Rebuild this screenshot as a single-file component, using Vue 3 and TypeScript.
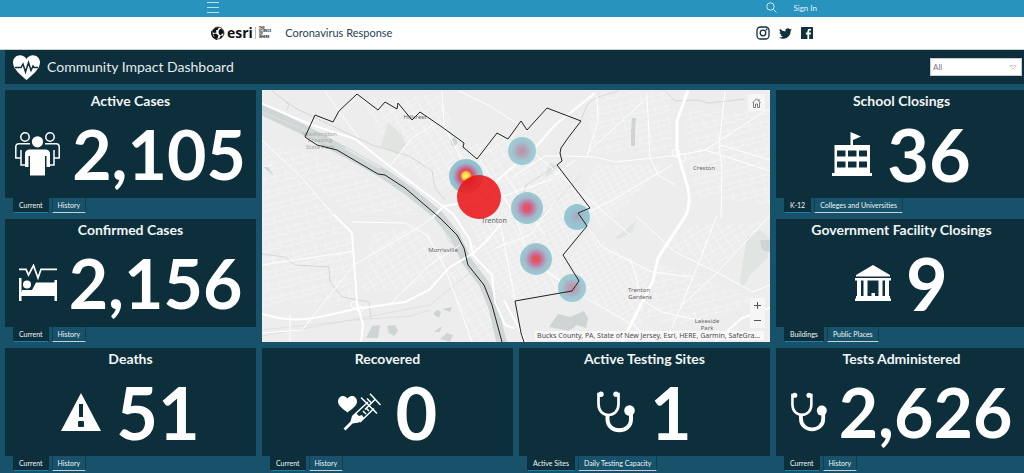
<script setup lang="ts">
import { ref, reactive } from 'vue'

interface Card {
  id: string
  title: string
  value: string
  icon: string
  iconBox: [number, number]
  tabs: string[]
  area: string
}

const cards: Card[] = [
  { id: 'active', title: 'Active Cases', value: '2,105', icon: 'people', iconBox: [45, 44], tabs: ['Current', 'History'], area: 'a' },
  { id: 'confirmed', title: 'Confirmed Cases', value: '2,156', icon: 'bed', iconBox: [38, 37], tabs: ['Current', 'History'], area: 'b' },
  { id: 'deaths', title: 'Deaths', value: '51', icon: 'warning', iconBox: [40, 38], tabs: ['Current', 'History'], area: 'c' },
  { id: 'recovered', title: 'Recovered', value: '0', icon: 'syringe', iconBox: [43, 38], tabs: ['Current', 'History'], area: 'd' },
  { id: 'sites', title: 'Active Testing Sites', value: '1', icon: 'stethoscope', iconBox: [38, 42], tabs: ['Active Sites', 'Daily Testing Capacity'], area: 'e' },
  { id: 'tests', title: 'Tests Administered', value: '2,626', icon: 'stethoscope', iconBox: [36, 40], tabs: ['Current', 'History'], area: 'f' },
  { id: 'schools', title: 'School Closings', value: '36', icon: 'school', iconBox: [40, 44], tabs: ['K-12', 'Colleges and Universities'], area: 'g' },
  { id: 'government', title: 'Government Facility Closings', value: '9', icon: 'civic', iconBox: [36, 36], tabs: ['Buildings', 'Public Places'], area: 'h' },
]

const iconView: Record<string, string> = {
  people: '0 0 45 44',
  bed: '0 0 38 37',
  warning: '0 0 40 38',
  syringe: '0 0 43 38',
  stethoscope: '0 0 38 42',
  school: '0 0 40 44',
  civic: '0 0 36 36',
}

const selected = reactive<Record<string, number>>(Object.fromEntries(cards.map((c) => [c.id, 0])))
const region = ref('All')

const streetGrids = [
  { fill: 'grid-a', points: '262,150 300,178 333,212 352,240 353,300 262,306' },
  { fill: 'grid-b', points: '360,100 440,94 462,150 520,128 500,180 440,190 395,160' },
  { fill: 'grid-c', points: '470,225 515,160 556,165 590,208 565,255 575,290 515,300 498,290' },
  { fill: 'grid-b', points: '372,232 418,228 448,250 440,275 410,290 362,290' },
  { fill: 'grid-c', points: '587,232 650,272 640,335 590,300 570,260' },
  { fill: 'grid-a', points: '685,110 770,110 770,205 690,195' },
  { fill: 'grid-a', points: '590,92 670,92 672,150 590,155' },
  { fill: 'grid-c', points: '595,165 665,165 600,230 580,200' },
  { fill: 'grid-b', points: '695,225 765,222 716,270 665,245' },
  { fill: 'grid-a', points: '660,265 710,280 755,300 700,325 645,320' },
  { fill: 'grid-b', points: '448,270 470,262 490,300 495,340 470,342' },
  { fill: 'grid-a', points: '262,145 350,212 420,215 370,178 300,150' },
]

const minorRoads = [
  'M262 140 302 178 336 218',
  'M262 265 355 251',
  'M262 333 302 330 354 265 419 227 437 214',
  'M352 222 405 223 427 235 445 268 472 342',
  'M325 91 340 113 359 138',
  'M390 166 412 138 439 121',
  'M442 91 444 125 462 161 473 187',
  'M459 91 490 106 522 127',
  'M563 156 595 157 615 162 672 156 705 150 770 108',
  'M705 150 770 171',
  'M720 145 770 160',
  'M647 93 650 158 658 175 675 185',
  'M725 91 719 145 722 168 721 218',
  'M647 98 587 153',
  'M597 96 598 121 587 156',
  'M672 165 615 199 577 218',
  'M635 215 675 252 718 273 753 292 770 285',
  'M717 215 698 265 672 328',
  'M770 215 717 273 682 305',
  'M587 226 602 247 652 272 692 277',
  'M540 265 575 292 633 325 655 342',
  'M642 300 662 312 688 318 720 322',
  'M630 258 637 280 640 300',
  'M480 160 515 215 530 260 575 292',
  'M505 175 545 235',
  'M492 200 550 180 575 160',
  'M496 248 530 235 556 200',
  'M500 222 515 300',
  'M390 304 430 265 460 245',
  'M290 315 290 342',
  'M512 178 545 156 563 156',
  'M530 150 590 200 630 235',
]

const hotspots = [
  { x: 522, y: 151, r: 14, heat: 'heat-faint' },
  { x: 466, y: 176, r: 17, heat: 'heat-peak' },
  { x: 527, y: 208, r: 16, heat: 'heat-strong' },
  { x: 577, y: 217, r: 13, heat: 'heat-cool' },
  { x: 536, y: 259, r: 16, heat: 'heat-strong' },
  { x: 572, y: 288, r: 14, heat: 'heat-faint' },
]
</script>

<template>
  <div class="page">
    <header>
      <div class="topbar">
        <nav class="topbar-inner" aria-label="Global">
          <button class="bare" type="button" aria-label="Menu">
            <svg width="12" height="12" viewBox="0 0 12 12"><path d="M0 1.5H12M0 6.5H12M0 11.5H12" stroke="#b7e2f2" fill="none" /></svg>
          </button>
          <div class="account">
            <button class="bare" type="button" aria-label="Search">
              <svg width="11" height="11" viewBox="0 0 11 11"><g fill="none" stroke="#cdeaf5"><circle cx="4.500" cy="4.500" r="3.700" /><path d="M7.300 7.300 10.500 10.500" /></g></svg>
            </button>
            <a class="signin" href="#">Sign In</a>
          </div>
        </nav>
      </div>
      <div class="sitebar">
        <div class="sitebar-inner">
          <a class="brand" href="#">
            <svg width="14" height="14" viewBox="0 0 14 14">
              <circle cx="7" cy="7" r="6" fill="#fff" stroke="#222" stroke-width=".8" />
              <path d="M2 4 5 1.500 8 1.300 7 3.500 5 4.500 5.500 6.500 3 7 1.500 6ZM8 4 10 2.500 12.500 5 13 8 11 7.500 10 9.500 8 8 7.500 6ZM2 8 5 7.500 7.500 9.500 6.500 12.500 4 12ZM9 10.500 12 9 10.500 12 8.500 12.800Z" fill="#111" />
              <path d="M1 5C0 9 2 12 6 13.500" fill="none" stroke="#111" stroke-width="1.300" />
            </svg>
            <span class="esri">esri</span>
            <span class="tagline">THE<br />SCIENCE<br />OF<br />WHERE</span>
          </a>
          <a class="site-title" href="#">Coronavirus Response</a>
          <div class="social">
            <a href="#" aria-label="Instagram">
              <svg width="14" height="14" viewBox="0 0 14 14"><g fill="none" stroke="#12313e" stroke-width="1.300"><rect x="1" y="1" width="12" height="12" rx="3.500" /><circle cx="7" cy="7" r="2.800" /></g><circle cx="10.600" cy="3.400" r=".9" fill="#12313e" /></svg>
            </a>
            <a href="#" aria-label="Twitter">
              <svg width="13" height="11" viewBox="0 1.800 24 20.400"><path fill="#12313e" d="M24 4.600a10 10 0 0 1-2.800.8 5 5 0 0 0 2.100-2.700 10 10 0 0 1-3.100 1.200A4.900 4.900 0 0 0 11.800 8.300 14 14 0 0 1 1.700 3.200a4.900 4.900 0 0 0 1.500 6.500 5 5 0 0 1-2.200-.6 4.900 4.900 0 0 0 3.900 4.900 5 5 0 0 1-2.200.1 4.900 4.900 0 0 0 4.600 3.400A10 10 0 0 1 0 19.500 14 14 0 0 0 21.500 7.100 10 10 0 0 0 24 4.600Z" /></svg>
            </a>
            <a href="#" aria-label="Facebook">
              <svg width="12" height="12" viewBox="0 0 12 12"><path fill="#12313e" d="M.6 0H11.400Q12 0 12 .6V11.400Q12 12 11.400 12H8.200V7.400H9.800L10 5.600H8.200V4.500Q8.200 3.600 9.100 3.600H10.100V2Q6.400 1.300 6.400 4.300V5.600H4.900V7.400H6.400V12H.6Q0 12 0 11.400V.6Q0 0 .6 0Z" /></svg>
            </a>
          </div>
        </div>
      </div>
    </header>

    <main class="dashboard">
      <div class="titlebar">
        <svg width="27" height="25" viewBox="0 0 27 25">
          <path fill="#fff" d="M13.500 25C9 21 0 14.500 0 7.500 0 0 9.500-2.500 13.500 4 17.500-2.500 27 0 27 7.500 27 14.500 18 21 13.500 25Z" />
          <path fill="none" stroke="#0d2f3b" stroke-width="1.500" d="M2 12.500H8L10 9 12.500 17 15.500 7.500 18 15.500 20 11 21 12.500H25" />
        </svg>
        <h1>Community Impact Dashboard</h1>
        <div class="filter">
          <select v-model="region" aria-label="Region">
            <option>All</option>
          </select>
          <svg width="8" height="5" viewBox="0 0 8 5"><path d="M.7.7H7.300L4 4.200Z" fill="none" stroke="#b9bfc2" stroke-width=".8" /></svg>
        </div>
      </div>

      <div class="grid">
        <section v-for="card in cards" :key="card.id" class="cell" :class="'area-' + card.area">
          <div class="card">
            <h2>{{ card.title }}</h2>
            <div class="metric" :class="{ long: card.value.length > 2 }">
              <svg :width="card.iconBox[0]" :height="card.iconBox[1]" :viewBox="iconView[card.icon]" aria-hidden="true">
                <g v-if="card.icon === 'people'">
                  <g fill="none" stroke="#fff" stroke-width="1.500">
                    <circle cx="10" cy="5" r="4.200" />
                    <circle cx="35" cy="5" r="4.200" />
                    <path d="M15 11.700H4Q.8 11.700.8 15V26H5.500M6 18V33H11M30 11.700H41Q44.200 11.700 44.200 15V26H39.500M39 18V33H34" />
                  </g>
                  <circle cx="22.500" cy="9.800" r="5.600" fill="#fff" />
                  <path d="M15 17.500H30Q35 17.500 35 22V35H31.500V24H30V43.500H15V24H13.500V35H10V22Q10 17.500 15 17.500Z" fill="#fff" />
                </g>
                <g v-else-if="card.icon === 'bed'">
                  <path d="M0 5.300H7L9.500 11 14.500 1.500 19 14 22 5.300H38" fill="none" stroke="#fff" stroke-width="1.700" />
                  <path d="M0 14H2.500V27.500H35.500V16H38V37H35.500V32H2.500V37H0Z" fill="#fff" />
                  <circle cx="8" cy="20.500" r="4" fill="#fff" />
                  <path d="M17 18.500H36V28H3V26H13Z" fill="#fff" />
                </g>
                <g v-else-if="card.icon === 'warning'">
                  <path d="M20 0 40 38H0Z" fill="#fff" />
                  <rect x="18" y="11" width="4" height="13" fill="#0d2f3b" />
                  <rect x="17" y="28" width="6" height="6" rx="1" fill="#0d2f3b" />
                </g>
                <g v-else-if="card.icon === 'syringe'">
                  <path d="M9.500 19.500C6 16.500 0 13 0 8.500 0 2.500 7 1 9.500 5.500 12 1 19 2.500 19 8.500 19 13 13 16.500 9.500 19.500Z" fill="#fff" />
                  <g fill="none" stroke="#fff" stroke-width="1.500">
                    <path d="M32 .8 42.500 12M37 6.500 27 16.500M23 4.500 39 20.500M33 9.500 29 5.500M15 23 30 9M22 29 36 15.500" />
                    <path d="M25 18 28 21M28 15 31 18" />
                  </g>
                  <path d="M14 23 18 20 21 23 24 22 26 25 21 29.500 14.500 30.500 7.500 37.500 5.500 35.500 12.500 28.500Z" fill="#fff" />
                </g>
                <g v-else-if="card.icon === 'stethoscope'">
                  <g fill="none" stroke="#fff">
                    <path d="M4 3H1.500V13C1.500 20 6 24 11.500 24S21.500 20 21.500 13V3H19" stroke-width="2.700" />
                    <path d="M10.500 24V28C10.500 43 34 43 34 28V23" stroke-width="4" />
                  </g>
                  <circle cx="4" cy="3.300" r="2.700" fill="#fff" />
                  <circle cx="19" cy="3.300" r="2.700" fill="#fff" />
                  <circle cx="32.500" cy="19.500" r="5.300" fill="#fff" />
                </g>
                <g v-else-if="card.icon === 'school'" fill="#fff">
                  <path d="M18.500 14V0L29 4.500 21 8V14Z" />
                  <path fill-rule="evenodd" d="M2.500 13H38V41H40V44H0V41H2.500ZM5 18.500V24.500H13.500V18.500ZM16 18.500V24.500H24.500V18.500ZM27 18.500V24.500H35V18.500ZM5 29.500V35.500H13.500V29.500ZM16 29.500V35.500H24.500V29.500ZM27 29.500V35.500H35V29.500Z" />
                </g>
                <g v-else fill="#fff">
                  <path d="M18 0 35 10V11.500H1V10ZM0 13H36V15.500H0Z" />
                  <path d="M2 15H6V32H2ZM8.500 15H12.500V32H8.500ZM23.500 15H27.500V32H23.500ZM30 15H34V32H30Z" />
                  <path d="M1 31H16.500V28H20V31H35V33.500H36V36H0V33.500H1Z" />
                </g>
              </svg>
              <span class="value">{{ card.value }}</span>
            </div>
          </div>
          <div class="tabs" role="tablist" :aria-label="card.title">
            <button
              v-for="(tab, i) in card.tabs"
              :key="tab"
              type="button"
              role="tab"
              :aria-selected="selected[card.id] === i"
              :class="{ on: selected[card.id] === i }"
              @click="selected[card.id] = i"
            >{{ tab }}</button>
          </div>
        </section>

        <section class="map" aria-label="Map">
          <svg class="canvas" viewBox="262 90 508 252" preserveAspectRatio="xMidYMid slice">
            <defs>
              <pattern id="grid-a" width="11" height="13" patternUnits="userSpaceOnUse" patternTransform="rotate(-14)"><path d="M0 4H11M4 0V9M0 10Q5 7 11 10" class="street" /></pattern>
              <pattern id="grid-b" width="9" height="12" patternUnits="userSpaceOnUse" patternTransform="rotate(-32)"><path d="M0 3H9M3 0V12M3 8H9" class="street" /></pattern>
              <pattern id="grid-c" width="7" height="10" patternUnits="userSpaceOnUse" patternTransform="rotate(-30)"><path d="M0 3H7M2 0V10M0 8H7" class="street" /></pattern>
              <radialGradient id="heat-faint"><stop offset="0" stop-color="#b9859f" /><stop offset=".35" stop-color="#ae9bb2" /><stop offset=".7" stop-color="#96c2cd" /><stop offset="1" stop-color="#93c9d4" /></radialGradient>
              <radialGradient id="heat-strong"><stop offset="0" stop-color="#e8403c" /><stop offset=".2" stop-color="#db4655" /><stop offset=".4" stop-color="#bb70a0" /><stop offset=".68" stop-color="#99b4c5" /><stop offset="1" stop-color="#8dc8d2" /></radialGradient>
              <radialGradient id="heat-cool"><stop offset="0" stop-color="#a59db7" /><stop offset=".5" stop-color="#92b9c9" /><stop offset="1" stop-color="#8ac6d2" /></radialGradient>
              <radialGradient id="heat-peak"><stop offset="0" stop-color="#ffff42" /><stop offset=".2" stop-color="#ffd332" /><stop offset=".36" stop-color="#db3543" /><stop offset=".54" stop-color="#b86899" /><stop offset=".75" stop-color="#8bb5c4" /><stop offset="1" stop-color="#86c4d0" /></radialGradient>
            </defs>
            <rect x="162" y="-10" width="708" height="452" fill="#ededed" />
            <polygon v-for="(g, i) in streetGrids" :key="i" :points="g.points" :fill="`url(#${g.fill})`" />
            <g fill="#e1e5e1">
              <path d="M388 122 402 135 406 144 398 155 381 146ZM549 163 558 164 556 170 545 178ZM615 238 637 220 632 232 619 239ZM747 237 760 230 770 238 768 258 750 275 742 289 740 280ZM441 222 451 232 459 248 448 242Z" />
            </g>
            <g fill="#cfd4d5">
              <path d="M549 327 558 314 570 317 584 311 588 318 586 328 577 325 569 331ZM366 338 372 326 380 325 378 338ZM387 326 395 325 398 331 394 336 389 333ZM433 314 437 310 441 312 439 318ZM442 309 452 307 450 312ZM434 332 442 326 440 332ZM263 167 268 167 274 176ZM450 140 455 137 458 143 453 147ZM440 339 447 333 453 335 450 342ZM632 118 636 118 635 131 635 146 631 146 631 132ZM760 240 770 240 770 252 762 250Z" />
            </g>
            <path class="river" d="M256 107 300 128 345 152 384 174 410 192 438 215 455 236 466 260 484 284 493 306 503 348" />
            <path class="canal" d="M345 148 380 168" />
            <path class="stream" d="M272 91 295 108 372 145 409 156 432 171 435 188 445 200M262 254 285 257 295 265 329 267 330 282 342 297 369 302 371 318M665 91 675 101 698 100 708 103 728 101 745 99M581 120 587 105 595 98 618 91M556 165 542 175 526 185 524 192M282 98 289 105 287 110" />
            <path class="rail" d="M262 330 355 320 410 316 430 310M262 336 330 324 430 305 480 265M262 112 300 128 330 145M540 218 582 174" />
            <path v-for="d in minorRoads" :key="d" :d="d" class="minor" />
            <g class="major">
              <path d="M258 102 312 125 355 139 392 168 444 207 454 215 470 240 473 255 492 275 495 302 505 325 514 328" />
              <path d="M432 218 444 206 480 200 502 176 535 148 555 125 595 93" />
              <path d="M262 314Q290 323 320 317L355 309 405 302 429 290 449 268 475 252 490 237 502 222" />
              <path d="M334 215 352 233 357 303 363 325 361 342" />
              <path d="M770 308 742 318 715 342M504 300 526 342" />
            </g>
            <path class="freeway" d="M688 90 677 121 677 151 688 188Q691 205 686 215L658 258 653 281 622 342" />
            <g class="ramp"><circle cx="354" cy="305" r="3" /><circle cx="360" cy="309" r="3" /><circle cx="676" cy="153" r="4" /><circle cx="682" cy="158" r="4" /><circle cx="473" cy="249" r="3" /></g>
            <g class="labels">
              <text x="415" y="119">Hillcrest</text>
              <text x="443" y="252">Morrisville</text>
              <text x="704" y="170">Creston</text>
              <text x="639" y="292">Trenton</text>
              <text x="640" y="299">Gardens</text>
              <text x="707" y="323">Lakeside</text>
              <text x="707" y="330">Park</text>
              <g class="park"><text x="320" y="136">Washington</text><text x="320" y="142">Crossing</text><text x="320" y="149">State Park</text></g>
            </g>
            <circle v-for="h in hotspots" :key="h.x" :cx="h.x" :cy="h.y" :r="h.r" :fill="`url(#${h.heat})`" opacity=".9" />
            <path class="boundary" d="M305 137 315 115 333 122 339 111 357 94 378 110 385 102 397 109 398 103 412 120 420 112 442 127 464 143 463 147 477 159 497 133 508 139 521 121 527 130 547 108 581 121 568 138 561 148 560 153 562 161 557 165 590 208 578 213 587 226 563 255 579 281 572 291 515 301 521 333 524 342M305 137 317 145 337 150 378 174 385 175 405 188 440 218 457 235 464 248 468 265 484 285 492 305 502 342" />
            <circle cx="479" cy="197" r="22" fill="#eb1719" opacity=".88" />
            <text x="494" y="223" class="city">Trenton</text>
          </svg>
          <button class="map-btn home" type="button" aria-label="Default extent">
            <svg width="9" height="10" viewBox="0 0 9 10"><path d="M.5 5 4.500.8 8.500 5M1.500 4.500V9.500H3.500V6H5.500V9.500H7.500V4.500M7 3V1" fill="none" stroke="#6e6e6e" stroke-width=".9" /></svg>
          </button>
          <div class="zoomer">
            <button class="map-btn" type="button" aria-label="Zoom in"><svg width="7" height="7" viewBox="0 0 7 7"><path d="M0 3.500H7M3.500 0V7" stroke="#555" /></svg></button>
            <button class="map-btn" type="button" aria-label="Zoom out"><svg width="7" height="7" viewBox="0 0 7 7"><path d="M0 3.500H7" stroke="#555" /></svg></button>
          </div>
          <p class="credit">Bucks County, PA, State of New Jersey, Esri, HERE, Garmin, SafeGra...</p>
        </section>
      </div>
    </main>
  </div>
</template>

<style>
body {
  background: #17526a;
}
</style>

<style scoped>
.page {
  min-height: 100vh;
  display: flex;
  flex-direction: column;
  overflow: hidden;
  background: #17526a;
  color: #fff;
  font-family: Lato, "Open Sans", sans-serif;
}
svg {
  display: block;
  flex: none;
}
a {
  color: inherit;
  text-decoration: none;
}
button {
  font: inherit;
  color: inherit;
  cursor: pointer;
}
.bare {
  padding: 0;
  border: 0;
  background: none;
}
.topbar {
  background: #2894bd;
}
.topbar-inner {
  max-width: 610px;
  height: 17px;
  margin: 0 auto;
  display: flex;
  align-items: center;
  justify-content: space-between;
}
.topbar-inner > .bare {
  padding-bottom: 4px;
}
.account {
  display: flex;
  align-items: center;
  gap: 16px;
  padding-bottom: 2px;
}
.signin {
  font-size: 8px;
  line-height: 12px;
  color: #e3f3f9;
}
.sitebar {
  background: #fff;
  border-bottom: 1px solid #c9ced0;
}
.sitebar-inner {
  max-width: 602px;
  height: 32px;
  margin: 0 auto;
  display: flex;
  align-items: center;
}
.brand {
  display: flex;
  align-items: center;
  gap: 2px;
  color: #111;
}
.esri {
  font: bold 14px/16px "Open Sans", sans-serif;
}
.tagline {
  padding-left: 3px;
  border-left: 1px solid #bbb;
  font: bold 3px/3px "Open Sans", sans-serif;
}
.site-title {
  margin-left: 14px;
  font-size: 11px;
  line-height: 14px;
  color: #1d4354;
}
.social {
  display: flex;
  align-items: center;
  gap: 9px;
  margin-left: auto;
}
.dashboard {
  flex: 1;
  display: flex;
  flex-direction: column;
  gap: 6px;
  padding: 0 0 2px 5px;
}
.titlebar {
  display: flex;
  align-items: center;
  gap: 7px;
  min-height: 34px;
  padding: 0 2px 0 8px;
  background: #0d2f3b;
}
h1 {
  margin: 0;
  font-size: 14px;
  line-height: 18px;
  font-weight: 400;
  color: #e6ebed;
}
.filter {
  display: flex;
  align-items: center;
  width: 92px;
  margin-left: auto;
  background: #fff;
  border: 1px solid #c6cdd0;
  box-sizing: border-box;
  padding-right: 4px;
}
select {
  appearance: none;
  flex: 1;
  height: 16px;
  padding: 0 2px;
  border: 0;
  background: none;
  font: 8px/16px Lato, sans-serif;
  color: #777;
}
.grid {
  flex: 1;
  display: grid;
  grid-template-columns: repeat(4, 1fr);
  grid-template-rows: repeat(3, minmax(123px, 1fr));
  grid-template-areas: "a m m g" "b m m h" "c d e f";
  gap: 6px;
  margin-right: -3px;
}
.area-a { grid-area: a; }
.area-b { grid-area: b; }
.area-c { grid-area: c; }
.area-d { grid-area: d; }
.area-e { grid-area: e; }
.area-f { grid-area: f; }
.area-g { grid-area: g; }
.area-h { grid-area: h; }
.cell {
  display: flex;
  flex-direction: column;
  min-width: 0;
}
.card {
  flex: 1;
  display: flex;
  flex-direction: column;
  background: #0d2f3b;
}
h2 {
  margin: 3px 0 0;
  font-size: 14px;
  line-height: 16px;
  font-weight: 700;
  text-align: center;
  color: #f1f4f5;
}
.metric {
  flex: 1;
  display: flex;
  align-items: center;
  justify-content: center;
  gap: 15px;
}
.value {
  font-size: 72px;
  line-height: 80px;
  font-weight: 700;
}
.long {
  gap: 12px;
}
.long .value {
  font-size: 68px;
}
.tabs {
  display: flex;
  gap: 3px;
  padding-left: 8px;
}
.tabs button {
  height: 15px;
  padding: 0 5px;
  background: #17526a;
  border: 0 solid #10404f;
  border-width: 0 1px 1px;
  border-bottom-color: #c3d0d6;
  font-size: 7px;
  line-height: 14px;
  color: #f0f4f6;
}
.tabs .on {
  background: #0d2f3b;
  border-color: #0d2f3b;
  border-bottom-color: #1c7fa8;
}
.map {
  grid-area: m;
  position: relative;
  overflow: hidden;
}
.canvas {
  position: absolute;
  inset: 0;
  width: 100%;
  height: 100%;
}
.street {
  fill: none;
  stroke: #f8f8f8;
  stroke-width: .7;
}
.river {
  fill: none;
  stroke: #d0d5d6;
  stroke-width: 10;
}
.canal {
  fill: none;
  stroke: #e6e8e8;
  stroke-width: 2;
}
.stream {
  fill: none;
  stroke: #d4d8d8;
}
.rail {
  fill: none;
  stroke: #e0e0e0;
}
.minor {
  fill: none;
  stroke: #fff;
  stroke-width: 1;
}
.major {
  fill: none;
  stroke: #fff;
  stroke-width: 2;
  stroke-linejoin: round;
}
.freeway {
  fill: none;
  stroke: #fff;
  stroke-width: 3;
}
.ramp {
  fill: none;
  stroke: #fff;
}
.boundary {
  fill: none;
  stroke: #222;
  stroke-width: 1;
}
.labels,
.city {
  font: 6px "Noto Sans", sans-serif;
  fill: #666;
  text-anchor: middle;
}
.park {
  fill: #a3aaa0;
}
.city {
  font-size: 7px;
}
.map-btn {
  display: flex;
  align-items: center;
  justify-content: center;
  width: 15px;
  height: 15px;
  padding: 0;
  border: 0;
  background: #f6f6f6;
}
.home {
  position: absolute;
  top: 4px;
  right: 5px;
  width: 17px;
  height: 17px;
}
.zoomer {
  position: absolute;
  right: 5px;
  bottom: 14px;
}
.credit {
  position: absolute;
  right: 6px;
  bottom: 2px;
  margin: 0;
  padding: 0 4px 0 2px;
  background: rgba(250, 250, 250, .8);
  font: 7px/9px "Noto Sans", sans-serif;
  color: #4c4c4c;
  white-space: nowrap;
}
</style>
